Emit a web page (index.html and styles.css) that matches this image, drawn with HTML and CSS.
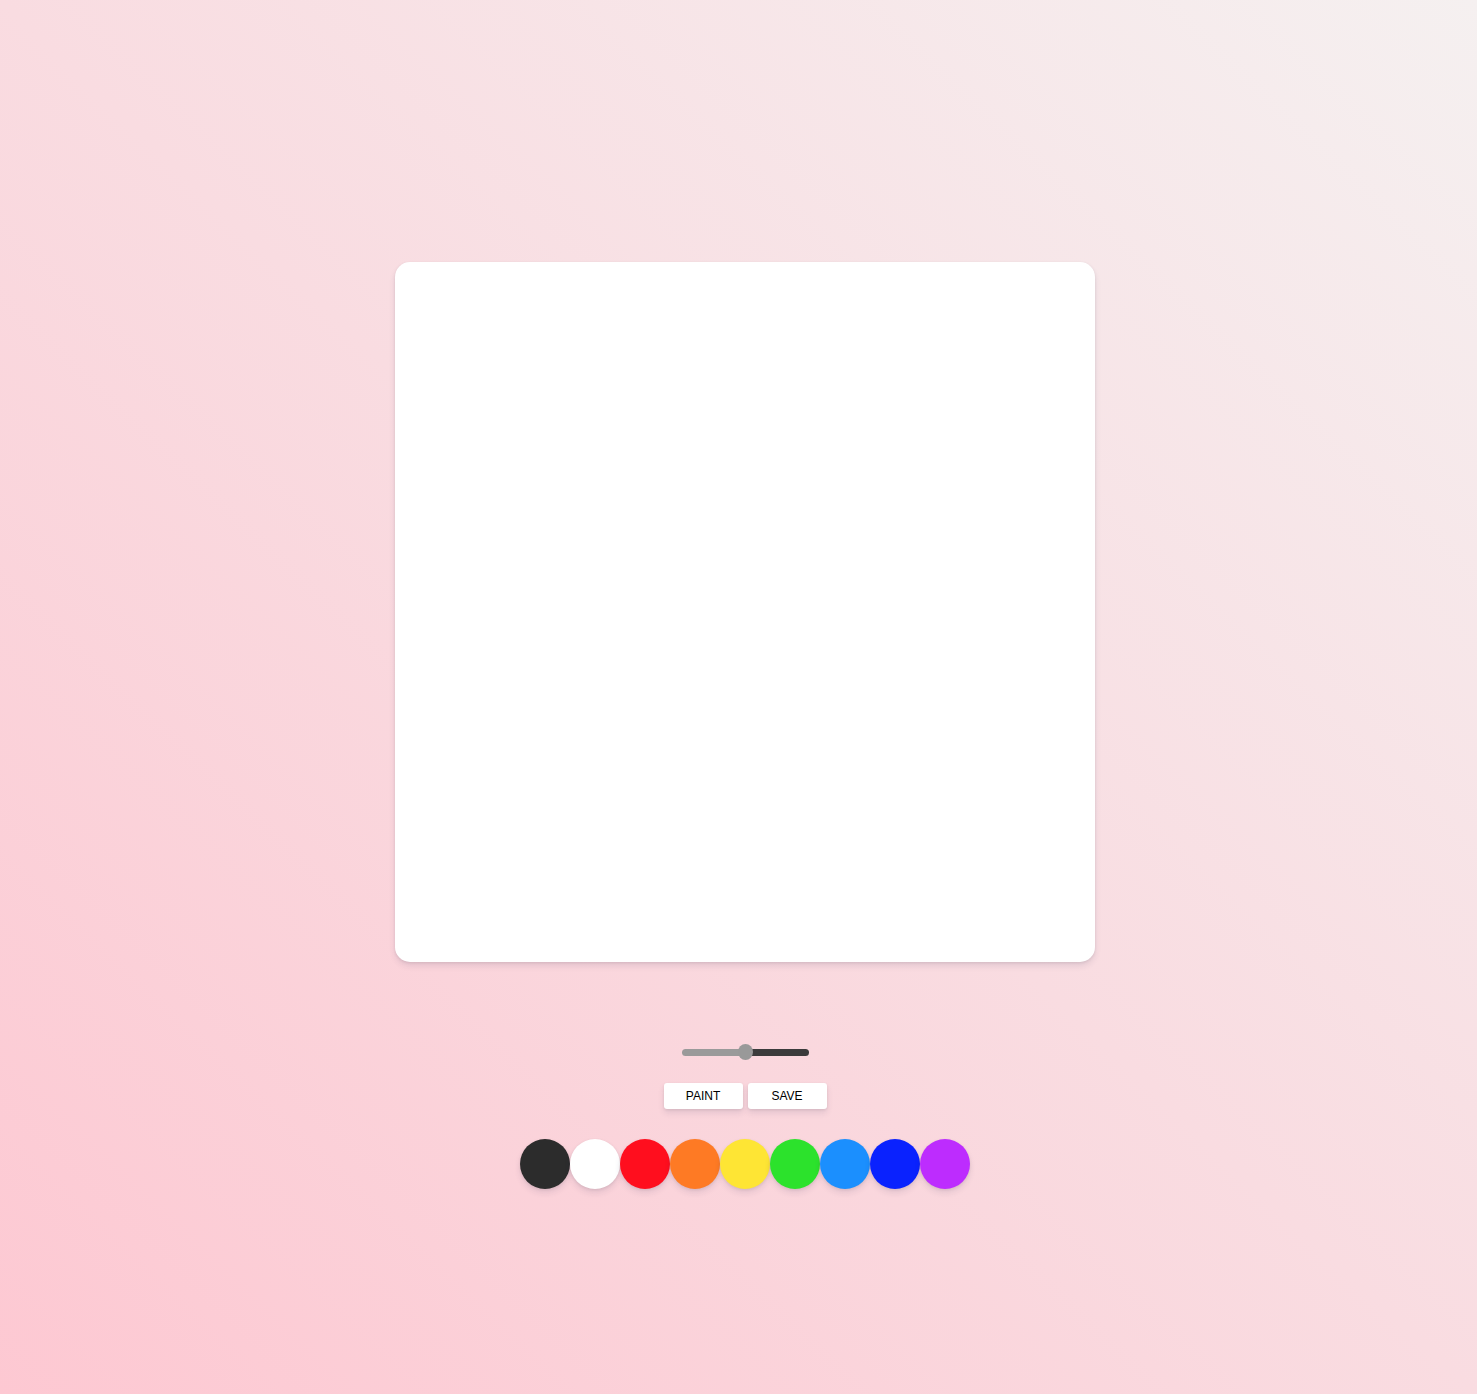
FILE: index.html
```html
<!DOCTYPE html>
<html lang="en">
<head>
<meta charset="UTF-8">
<title>PaintJS</title>
<link rel="stylesheet" href="styles.css">
</head>
<body>
  <canvas class="canvas" width="700" height="700"></canvas>
  <div class="controls">
    <div class="controls__range">
      <input type="range" class="range" min="0.1" max="5.0" value="2.55" step="0.05">
    </div>
    <div class="controls__btns">
      <button class="btn">Paint</button>
      <button class="btn">Save</button>
    </div>
    <div class="controls__colors">
      <div class="color c-black"></div>
      <div class="color c-white"></div>
      <div class="color c-red"></div>
      <div class="color c-orange"></div>
      <div class="color c-yellow"></div>
      <div class="color c-green"></div>
      <div class="color c-sky"></div>
      <div class="color c-blue"></div>
      <div class="color c-purple"></div>
    </div>
  </div>
</body>
</html>
```
FILE: styles.css
```css
html {
  min-height: 100%;
}
body {
  margin: 0;
  min-height: 100vh;
  box-sizing: border-box;
  padding: 262px 0 0 13px;
  display: flex;
  flex-direction: column;
  align-items: center;
  font-family: "Liberation Sans", Arial, sans-serif;
  background: linear-gradient(to top right, #fdc8d2 0%, #f5f0f0 100%);
}
.canvas {
  display: block;
  width: 700px;
  height: 700px;
  background-color: #fff;
  border-radius: 15px;
  box-shadow: 0 4px 6px rgba(50, 50, 93, 0.11), 0 1px 3px rgba(0, 0, 0, 0.08);
}
.controls {
  margin-top: 80px;
  display: flex;
  flex-direction: column;
  align-items: center;
}
.controls__range {
  margin-bottom: 21px;
}
.range {
  -webkit-appearance: none;
  appearance: none;
  display: block;
  margin: 2px 0;
  padding: 0;
  width: 127px;
  height: 16px;
  background: transparent;
}
.range::-webkit-slider-runnable-track {
  height: 7px;
  border-radius: 4px;
  background: linear-gradient(to right, #9a9a9a 0, #9a9a9a 50%, #3b3b3b 50%, #3b3b3b 100%);
}
.range::-webkit-slider-thumb {
  -webkit-appearance: none;
  appearance: none;
  width: 15px;
  height: 16px;
  border-radius: 50%;
  background: #999999;
  margin-top: -4.5px;
}
.controls__btns {
  display: flex;
  gap: 5px;
  margin-bottom: 30px;
}
.btn {
  all: unset;
  cursor: pointer;
  background-color: #fff;
  padding: 5px 0;
  width: 79px;
  height: 16px;
  line-height: 16px;
  text-align: center;
  border-radius: 3px;
  box-shadow: 0 4px 6px rgba(50, 50, 93, 0.11), 0 1px 3px rgba(0, 0, 0, 0.08);
  color: #000;
  text-transform: uppercase;
  font-family: "Liberation Sans", Arial, sans-serif;
  font-size: 12px;
}
.controls__colors {
  display: flex;
}
.color {
  width: 50px;
  height: 50px;
  border-radius: 50%;
  cursor: pointer;
  box-shadow: 0 4px 6px rgba(50, 50, 93, 0.11), 0 1px 3px rgba(0, 0, 0, 0.08);
}
.c-black { background-color: #2c2c2c; }
.c-white { background-color: #ffffff; }
.c-red { background-color: #ff0e1e; }
.c-orange { background-color: #fe7a24; }
.c-yellow { background-color: #fee534; }
.c-green { background-color: #2ce22c; }
.c-sky { background-color: #1b8ffe; }
.c-blue { background-color: #0a22fe; }
.c-purple { background-color: #bd2cfe; }
```
